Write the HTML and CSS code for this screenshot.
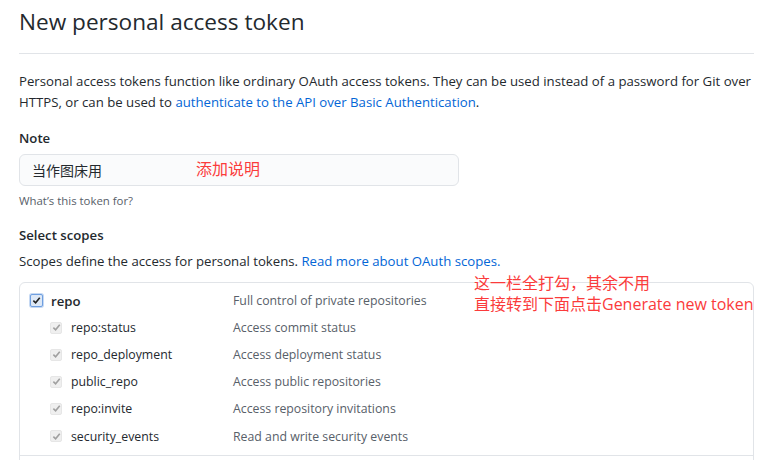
FILE: index.html
```html
<!DOCTYPE html>
<html>
<head>
<meta charset="utf-8">
<link rel="stylesheet" href="styles.css">
</head>
<body>
<div class="page">
  <div class="subhead">
    <h1 class="subhead-title">New personal access token</h1>
  </div>
  <p class="intro">Personal access tokens function like ordinary OAuth access tokens. They can be used instead of a password for Git over HTTPS, or can be used to <a href="#">authenticate to the API over Basic Authentication</a>.</p>

  <div class="field">
    <label class="label">Note</label>
    <div class="input">当作图床用<span class="note-red">添加说明</span></div>
    <p class="hint">What’s this token for?</p>
  </div>

  <div class="field">
    <label class="label">Select scopes</label>
    <p class="scopes-desc">Scopes define the access for personal tokens. <a href="#">Read more about OAuth scopes.</a></p>
  </div>

  <div class="scope-box">
    <div class="scope-group">
      <div class="row">
        <div class="name main"><span class="cb cb-main"><svg viewBox="0 0 10 10" width="9" height="9"><path d="M1.5 5.2 L4 7.6 L8.6 2" fill="none" stroke="#222" stroke-width="1.8"/></svg></span><span class="main-name">repo</span></div>
        <div class="desc">Full control of private repositories</div>
      </div>
      <div class="row">
        <div class="name sub"><span class="cb cb-sub"><svg viewBox="0 0 10 10" width="9" height="9"><path d="M1.5 5.2 L4 7.6 L8.6 2" fill="none" stroke="#a0a0a0" stroke-width="1.8"/></svg></span>repo:status</div>
        <div class="desc">Access commit status</div>
      </div>
      <div class="row">
        <div class="name sub"><span class="cb cb-sub"><svg viewBox="0 0 10 10" width="9" height="9"><path d="M1.5 5.2 L4 7.6 L8.6 2" fill="none" stroke="#a0a0a0" stroke-width="1.8"/></svg></span>repo_deployment</div>
        <div class="desc">Access deployment status</div>
      </div>
      <div class="row">
        <div class="name sub"><span class="cb cb-sub"><svg viewBox="0 0 10 10" width="9" height="9"><path d="M1.5 5.2 L4 7.6 L8.6 2" fill="none" stroke="#a0a0a0" stroke-width="1.8"/></svg></span>public_repo</div>
        <div class="desc">Access public repositories</div>
      </div>
      <div class="row">
        <div class="name sub"><span class="cb cb-sub"><svg viewBox="0 0 10 10" width="9" height="9"><path d="M1.5 5.2 L4 7.6 L8.6 2" fill="none" stroke="#a0a0a0" stroke-width="1.8"/></svg></span>repo:invite</div>
        <div class="desc">Access repository invitations</div>
      </div>
      <div class="row">
        <div class="name sub"><span class="cb cb-sub"><svg viewBox="0 0 10 10" width="9" height="9"><path d="M1.5 5.2 L4 7.6 L8.6 2" fill="none" stroke="#a0a0a0" stroke-width="1.8"/></svg></span>security_events</div>
        <div class="desc">Read and write security events</div>
      </div>
    </div>
    <div class="scope-group next"></div>
  </div>

  <div class="annotation">这一栏全打勾，其余不用<br>直接转到下面点击Generate new token</div>
</div>
</body>
</html>
```

FILE: styles.css
```css
html, body {
  margin: 0;
  padding: 0;
  background: #fff;
}
body {
  font-family: "Open Sans", "Noto Sans CJK SC", sans-serif;
  font-size: 13.2px;
  color: #24292e;
  overflow: hidden;
}
.page {
  position: relative;
  width: 735px;
  margin-left: 19px;
}
a {
  color: #0366d6;
  text-decoration: none;
}
.subhead {
  border-bottom: 1px solid #e1e4e8;
  padding-bottom: 13px;
}
.subhead-title {
  margin: 0;
  padding-top: 4px;
  font-size: 22.6px;
  font-weight: 400;
  line-height: 36px;
}
.intro {
  margin: 17px 0 0;
  line-height: 21px;
}
.field {
  margin-top: 15px;
}
.label {
  display: block;
  font-weight: 600;
  line-height: 20px;
}
.input {
  box-sizing: border-box;
  width: 440px;
  height: 32px;
  margin-top: 6px;
  padding: 0 12px;
  background: #fafbfc;
  border: 1px solid #e1e4e8;
  border-radius: 6px;
  line-height: 30px;
  font-family: "Noto Sans CJK SC", sans-serif;
  font-size: 14px;
  position: relative;
}
.note-red {
  position: absolute;
  left: 176px;
  top: -2px;
  color: #fb3b3b;
  font-size: 16px;
}
.hint {
  margin: 6px 0 0;
  font-size: 11.4px;
  color: #586069;
  line-height: 18px;
}
.scopes-desc {
  margin: 6px 0 0;
  line-height: 20px;
}
.scope-box {
  margin-top: 11px;
  border: 1px solid #e1e4e8;
  border-radius: 6px;
  font-size: 12.3px;
}
.scope-group {
  padding: 4px 0 5px;
}
.scope-group.next {
  border-top: 1px solid #e1e4e8;
  height: 40px;
}
.row {
  display: flex;
  height: 27px;
  align-items: center;
}
.row:last-child {
  height: 28px;
}
.name {
  box-sizing: border-box;
  width: 213px;
  flex: none;
  display: flex;
  align-items: center;
}
.name.main {
  padding-left: 10px;
  font-size: 13.2px;
}
.name.sub {
  padding-left: 30px;
}
.main-name {
  font-weight: 600;
}
.desc {
  color: #586069;
}
.cb {
  box-sizing: border-box;
  width: 12px;
  height: 12px;
  margin-right: 9px;
  display: inline-flex;
  align-items: center;
  justify-content: center;
  border-radius: 2px;
  flex: none;
}
.cb-main {
  width: 13px;
  height: 13px;
  margin-right: 8px;
  border: 1px solid #6f9fe0;
  background: #dde8f6;
  box-shadow: 0 0 0 1px #c6d9f3;
}
.cb-sub {
  border: 1px solid #e6e6e6;
  background: #efefef;
}
.annotation {
  position: absolute;
  left: 455px;
  top: 273px;
  color: #fb3b3b;
  font-family: "Open Sans", "Noto Sans CJK SC", sans-serif;
  font-size: 16px;
  line-height: 21px;
  white-space: nowrap;
}
```
